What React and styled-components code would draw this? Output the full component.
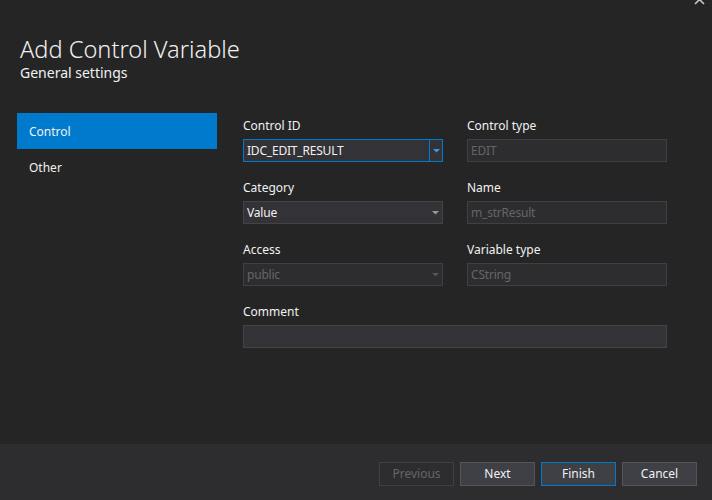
import React from "react";
import styled, { createGlobalStyle, css } from "styled-components";

const Global = createGlobalStyle`
  html, body { margin: 0; padding: 0; background: #252526; }
  body { font-family: "Noto Sans", "Open Sans", sans-serif; color: #f1f1f1; }
  * { box-sizing: border-box; }
`;

const Page = styled.div`
  position: relative;
  width: 712px;
  height: 500px;
  display: flex;
  flex-direction: column;
  background: #252526;
  overflow: hidden;
`;

const Close = styled.svg`
  position: absolute;
  top: -5px;
  right: 6px;
`;

const Header = styled.div`
  padding: 35px 20px 0 20px;
`;

const Title = styled.div`
  font-size: 23.6px;
  font-weight: 300;
  line-height: 28px;
  color: #f1f1f1;
`;

const Subtitle = styled.div`
  margin-top: 1px;
  font-size: 14px;
  line-height: 18px;
  color: #f1f1f1;
`;

const Body = styled.div`
  flex: 1;
  display: flex;
  padding: 31px 0 0 17px;
  gap: 26px;
`;

const Sidebar = styled.div`
  width: 200px;
  display: flex;
  flex-direction: column;
`;

const NavItem = styled.div`
  height: 36px;
  display: flex;
  align-items: center;
  padding-left: 12px;
  font-size: 12px;
  color: #f1f1f1;
  ${(p) => p.$active && css`background: #007acc;`}
`;

const Form = styled.div`
  display: grid;
  grid-template-columns: 200px 200px;
  column-gap: 24px;
  row-gap: 18px;
  padding-top: 5px;
  align-content: start;
`;

const Field = styled.div`
  display: flex;
  flex-direction: column;
  gap: 6px;
  ${(p) => p.$wide && css`grid-column: 1 / span 2;`}
`;

const Label = styled.div`
  font-size: 12px;
  line-height: 15px;
  color: #f1f1f1;
`;

const Box = styled.div`
  height: 23px;
  display: flex;
  align-items: center;
  background: ${(p) => (p.$disabled ? "#2d2d30" : "#333337")};
  border: 1px solid ${(p) => (p.$focus ? "#007acc" : p.$disabled ? "#3f3f46" : "#434346")};
  color: ${(p) => (p.$disabled ? "#656565" : "#f1f1f1")};
  font-size: 12px;
`;

const BoxText = styled.div`
  flex: 1;
  padding-left: 3px;
  white-space: nowrap;
  letter-spacing: -0.2px;
`;

const Arrow = styled.div`
  width: 13px;
  height: 100%;
  display: flex;
  align-items: center;
  justify-content: center;
  ${(p) => p.$focus && css`border-left: 1px solid #007acc;`}
`;

const Footer = styled.div`
  height: 56px;
  background: #2d2d30;
  display: flex;
  justify-content: flex-end;
  align-items: center;
  gap: 6px;
  padding: 3px 15px 0 0;
`;

const Button = styled.button`
  width: 75px;
  height: 24px;
  font-family: inherit;
  font-size: 12px;
  padding: 0;
  background: ${(p) => (p.disabled ? "#2d2d30" : "#3f3f46")};
  color: ${(p) => (p.disabled ? "#656565" : "#f1f1f1")};
  border: 1px solid ${(p) => (p.$primary ? "#007acc" : p.disabled ? "#3f3f46" : "#555555")};
`;

function Caret({ color }) {
  return (
    <svg width="7" height="4" viewBox="0 0 7 4">
      <path d="M0 0 H7 L3.5 3.5 Z" fill={color} />
    </svg>
  );
}

function Combo({ value, focus, disabled }) {
  return (
    <Box $focus={focus} $disabled={disabled}>
      <BoxText>{value}</BoxText>
      <Arrow $focus={focus}>
        <Caret color={focus ? "#3399ff" : disabled ? "#555558" : "#999999"} />
      </Arrow>
    </Box>
  );
}

export default function App() {
  return (
    <Page>
      <Global />
      <Close width="12" height="10" viewBox="0 0 12 10">
        <path d="M1 0 L10 9 M10 0 L1 9" stroke="#c8c8c8" strokeWidth="1.6" />
      </Close>
      <Header>
        <Title>Add Control Variable</Title>
        <Subtitle>General settings</Subtitle>
      </Header>
      <Body>
        <Sidebar>
          <NavItem $active>Control</NavItem>
          <NavItem>Other</NavItem>
        </Sidebar>
        <Form>
          <Field>
            <Label>Control ID</Label>
            <Combo value="IDC_EDIT_RESULT" focus />
          </Field>
          <Field>
            <Label>Control type</Label>
            <Box $disabled><BoxText>EDIT</BoxText></Box>
          </Field>
          <Field>
            <Label>Category</Label>
            <Combo value="Value" />
          </Field>
          <Field>
            <Label>Name</Label>
            <Box $disabled><BoxText>m_strResult</BoxText></Box>
          </Field>
          <Field>
            <Label>Access</Label>
            <Combo value="public" disabled />
          </Field>
          <Field>
            <Label>Variable type</Label>
            <Box $disabled><BoxText>CString</BoxText></Box>
          </Field>
          <Field $wide>
            <Label>Comment</Label>
            <Box><BoxText></BoxText></Box>
          </Field>
        </Form>
      </Body>
      <Footer>
        <Button disabled>Previous</Button>
        <Button>Next</Button>
        <Button $primary>Finish</Button>
        <Button>Cancel</Button>
      </Footer>
    </Page>
  );
}
